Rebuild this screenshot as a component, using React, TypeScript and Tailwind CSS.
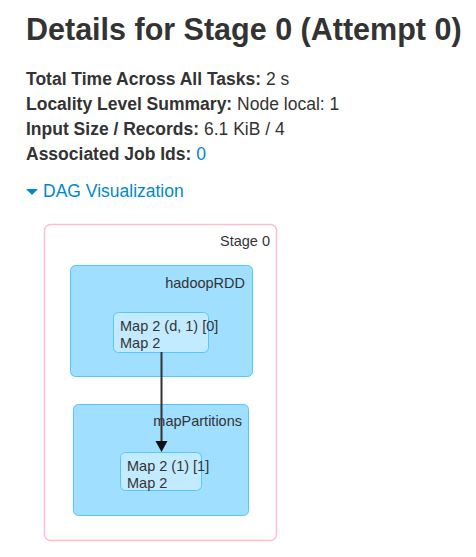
import React from 'react';

const info: { label: string; value: string; link?: boolean }[] = [
  { label: 'Total Time Across All Tasks:', value: '2 s' },
  { label: 'Locality Level Summary:', value: 'Node local: 1' },
  { label: 'Input Size / Records:', value: '6.1 KiB / 4' },
  { label: 'Associated Job Ids:', value: '0', link: true },
];

const DagGraph: React.FC = () => {
  return (
    <svg width={250} height={330} className="block" style={{ fontFamily: '"Liberation Sans", Arial, sans-serif' }}>
      {/* stage cluster */}
      <rect x={4.5} y={4.5} width={232} height={316} rx={6} fill="#ffffff" stroke="#ffbfca" strokeWidth={1.5} />
      <text x={230} y={26} textAnchor="end" fontSize={14.5} fill="#333333">Stage 0</text>

      {/* hadoopRDD cluster */}
      <rect x={30.5} y={45.5} width={182} height={111} rx={5} fill="#a0dfff" stroke="#56c6ff" strokeWidth={1} />
      <text x={205} y={68} textAnchor="end" fontSize={14.5} fill="#333333">hadoopRDD</text>
      <rect x={73.5} y={92.5} width={95} height={40} rx={5} fill="#c3ebff" stroke="#56c6ff" strokeWidth={1} />
      <text x={80} y={111} fontSize={14.5} fill="#333333">Map 2 (d, 1) [0]</text>
      <text x={80} y={128} fontSize={14.5} fill="#333333">Map 2</text>

      {/* mapPartitions cluster */}
      <rect x={33.5} y={184.5} width={175} height={111} rx={5} fill="#a0dfff" stroke="#56c6ff" strokeWidth={1} />
      <text x={202} y={206} textAnchor="end" fontSize={14.5} fill="#333333">mapPartitions</text>
      <rect x={80.5} y={232.5} width={81} height={38} rx={5} fill="#c3ebff" stroke="#56c6ff" strokeWidth={1} />
      <text x={87} y={251} fontSize={14.5} fill="#333333">Map 2 (1) [1]</text>
      <text x={87} y={268} fontSize={14.5} fill="#333333">Map 2</text>

      {/* edge */}
      <line x1={121.5} y1={132} x2={121.5} y2={222} stroke="#333333" strokeWidth={2} />
      <polygon points="115.5,221 127.5,221 121.5,232" fill="#111111" />
    </svg>
  );
};

export default function App() {
  return (
    <div className="min-h-screen bg-white pl-[26px] pt-[13px] text-[#333333] font-['Liberation_Sans',Arial,sans-serif]">
      <h3 className="text-[30.5px] font-bold leading-[33px]">Details for Stage 0 (Attempt 0)</h3>

      <ul className="mt-[21px] text-[17.5px] leading-[25px]">
        {info.map(row => (
          <li key={row.label}>
            <strong className="font-bold">{row.label}</strong>{' '}
            {row.link ? <a className="text-[#0088cc]">{row.value}</a> : row.value}
          </li>
        ))}
      </ul>

      <div className="mt-[12px] flex items-center gap-[5px] text-[17.5px] leading-[25px] text-[#0088cc]">
        <span className="inline-block w-0 h-0 border-l-[6px] border-r-[6px] border-t-[6px] border-l-transparent border-r-transparent border-t-[#0088cc]" />
        <span>DAG Visualization</span>
      </div>

      <div className="mt-[16px] ml-[14px]">
        <DagGraph />
      </div>
    </div>
  );
}
